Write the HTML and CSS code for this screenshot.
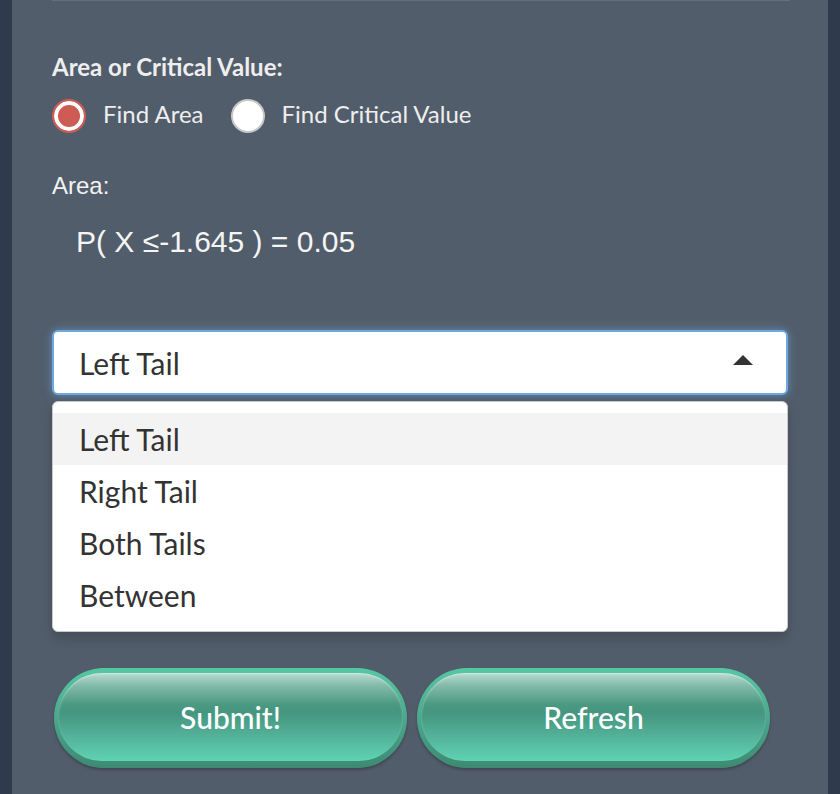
FILE: index.html
```html
<!DOCTYPE html>
<html>
<head>
<meta charset="utf-8">
<link rel="stylesheet" href="styles.css">
</head>
<body>
<div class="panel">
  <div class="topline"></div>
  <div class="field-label">Area or Critical Value:</div>
  <div class="radio-row">
    <label class="radio"><span class="dot checked"></span><span class="radio-text">Find Area</span></label>
    <label class="radio"><span class="dot"></span><span class="radio-text">Find Critical Value</span></label>
  </div>
  <div class="area-label">Area:</div>
  <div class="formula">P( X ≤-1.645 ) = 0.05</div>
  <div class="select">
    <span class="select-text">Left Tail</span>
    <span class="caret"></span>
  </div>
  <ul class="menu">
    <li class="item active">Left Tail</li>
    <li class="item">Right Tail</li>
    <li class="item">Both Tails</li>
    <li class="item">Between</li>
  </ul>
  <div class="buttons">
    <button class="pill"><span class="pill-inner">Submit!</span></button>
    <button class="pill"><span class="pill-inner">Refresh</span></button>
  </div>
</div>
</body>
</html>
```
FILE: styles.css
```css
html, body {
  margin: 0;
  padding: 0;
  background: #2f3b4d;
  height: 794px;
  overflow: hidden;
}
.panel {
  margin: 0 12px;
  height: 794px;
  background: #525d6b;
  padding: 0 40px;
  box-sizing: border-box;
  font-family: Lato, "Open Sans", sans-serif;
}
.topline {
  height: 1px;
  background: #66707d;
  margin-right: -2px;
}
.field-label {
  margin-top: 54px;
  font-weight: 700;
  font-size: 24px;
  line-height: 24px;
  color: #eeeeee;
}
.radio-row {
  margin-top: 20px;
  display: flex;
  align-items: center;
  gap: 27px;
  height: 34px;
}
.radio {
  display: flex;
  align-items: center;
  gap: 17px;
  font-size: 24px;
  color: #eeeeee;
}
.radio-text {
  margin-bottom: 5px;
}
.dot {
  width: 30px;
  height: 30px;
  border-radius: 50%;
  background: #ffffff;
  border: 2px solid #c8c8c8;
  box-sizing: content-box;
}
.dot.checked {
  border: 2px solid #cd5c55;
  background: #cd5c55;
  box-shadow: inset 0 0 0 4px #ffffff;
}
.area-label {
  margin-top: 40px;
  font-family: "Liberation Sans", Arial, sans-serif;
  font-size: 24px;
  line-height: 26px;
  color: #f2f2f2;
}
.formula {
  margin-top: 26px;
  padding-left: 24px;
  font-family: "Liberation Sans", Arial, sans-serif;
  font-size: 30px;
  line-height: 34px;
  color: #f5f5f5;
}
.select {
  margin-top: 71px;
  height: 65px;
  box-sizing: border-box;
  background: #ffffff;
  border: 2px solid #6ea8e0;
  border-radius: 6px;
  box-shadow: 0 0 8px rgba(102, 175, 233, 0.6);
  display: flex;
  align-items: center;
  justify-content: space-between;
  padding: 0 33px 0 25px;
}
.select-text {
  font-size: 30px;
  line-height: 34px;
  color: #333333;
}
.caret {
  width: 0;
  height: 0;
  border-left: 10px solid transparent;
  border-right: 10px solid transparent;
  border-bottom: 10px solid #333333;
  margin-bottom: 5px;
}
.menu {
  list-style: none;
  margin: 6px 0 0 0;
  padding: 11px 0 10px 0;
  background: #ffffff;
  border: 1px solid #c8c8c8;
  border-radius: 6px;
  box-shadow: 0 6px 12px rgba(0, 0, 0, 0.175);
}
.item {
  height: 52px;
  line-height: 52px;
  padding-left: 26px;
  font-size: 30px;
  color: #333333;
}
.item.active {
  background: #f3f3f3;
}
.buttons {
  margin-top: 36px;
  margin-left: 2px;
  display: flex;
  gap: 10px;
}
.pill {
  width: 353px;
  height: 100px;
  border: none;
  border-radius: 50px;
  padding: 5px 4px 7px 4px;
  box-sizing: border-box;
  background: linear-gradient(to bottom, #55c7a3 0%, #4aa88c 50%, #3d8a73 100%);
  box-shadow: 0 2px 3px rgba(0, 0, 0, 0.25);
  cursor: pointer;
  display: flex;
}
.pill-inner {
  flex: 1;
  border-radius: 46px;
  display: flex;
  align-items: center;
  justify-content: center;
  background: linear-gradient(to bottom, #b8dbd2 0%, #84bbab 14%, #4a9981 36%, #459680 46%, #52b097 70%, #60d3b4 100%);
  box-shadow: inset 0 1px 2px rgba(255, 255, 255, 0.4);
  font-family: Lato, "Open Sans", sans-serif;
  font-size: 30px;
  color: #ffffff;
  font-weight: 500;
}
```
